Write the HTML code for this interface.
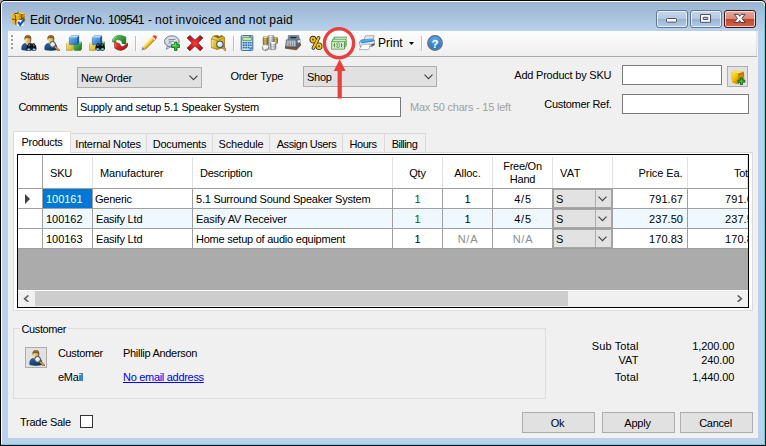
<!DOCTYPE html>
<html lang="en"><head><meta charset="utf-8"><title>Edit Order</title>
<style>
html,body{margin:0;padding:0}
body{width:766px;height:446px;position:relative;overflow:hidden;background:#a9a9a9;font-family:"Liberation Sans",sans-serif;font-size:11px;color:#000;line-height:13px;letter-spacing:-0.25px}
.a{position:absolute;white-space:nowrap}
#frame{left:0;top:0;width:766px;height:446px;background:#000;border-radius:5px 5px 0 0}
#frame2{left:1px;top:1px;width:764px;height:444px;border-radius:4px 4px 0 0;background:#fff}
#frame3{left:2px;top:2px;width:762px;height:442px;border-radius:3px 3px 0 0;background:linear-gradient(#99b4d1 0,#b9d1ea 29px,#b9d1ea 100%)}
#edgeR{left:764px;top:6px;width:1px;height:439px;background:#5ad3f2}
#edgeB{left:1px;top:444px;width:764px;height:1px;background:#5ad3f2}
#client{left:8px;top:31px;width:750px;height:407px;background:#f0f0f0}
#title{left:30px;top:12px;font-size:12px;line-height:16px;color:#000;letter-spacing:-0.02px}
.cb{top:10px;height:16px;border:1px solid #62789a;border-radius:3px;box-shadow:inset 0 0 0 1px rgba(255,255,255,.65);background:linear-gradient(#c5d6ea 0,#b3c9e3 48%,#97b4d6 52%,#b4cbe5 100%)}
#cbx{border-color:#431422;background:linear-gradient(#e3aa9c 0,#d68a78 48%,#c1452b 52%,#d0684e 100%)}
#tool{left:8px;top:31px;width:749px;height:25px;background:linear-gradient(#fdfdfd,#f5f5f5 60%,#eeeeee);border-bottom:1px solid #a9a9a9;box-shadow:inset -1px 0 0 rgba(0,0,0,.08)}
.sep{top:36px;width:1px;height:15px;background:#bdbdbd;box-shadow:1px 0 0 #fff}
.ic{top:35px;width:16px;height:16px}
.combo{height:19px;border:1px solid #adadad;background:#e1e1e1}
.combo span{position:absolute;left:3px;top:4px}
.combo svg{position:absolute;right:3.5px;top:7.4px}
.tb{height:18px;border:1px solid #7a7a7a;background:#fff}
.tab{top:133px;height:19px;border:1px solid #d9d9d9;border-bottom:none;background:#f0f0f0;box-sizing:border-box;text-align:center;line-height:20px}
.btn{height:19px;border:1px solid #adadad;background:#e1e1e1;text-align:center;line-height:21px;text-indent:-2px}
.hc{top:155px;height:33px;border-right:1px solid transparent;box-sizing:border-box;background:linear-gradient(#e2e2e2,#e2e2e2) right 2px/1px 100% no-repeat border-box,#fff}
.row{left:18px;width:730px;height:19px;border-bottom:1px solid #a0a0a0}
.c{top:0;height:19px;border-right:1px solid #a0a0a0;box-sizing:border-box;line-height:20px;padding:0 2px;overflow:hidden}
.r{text-align:right}.m{text-align:center}
.vat{top:0;left:535px;width:59px;height:19px;box-sizing:border-box;border:1px solid #a6a6a6;background:#e2e2e2}
</style></head><body>
<div class="a" id="frame"></div><div class="a" id="frame2"></div><div class="a" id="frame3"></div>
<div class="a" id="edgeR"></div><div class="a" id="edgeB"></div>
<div class="a" id="client"></div>
<!--TITLE-->
<svg class="a" style="left:11px;top:11px" width="16" height="16" viewBox="0 0 16 16">
<path d="M0.6 3.4 L5.6 0.8 L13.6 2.2 L13.8 10.4 L8 14.8 L1.6 12.6Z" fill="#e8b41a"/>
<path d="M0.6 3.4 L5.6 0.8 L13.6 2.2 L8 4.4Z" fill="#f9dc5a"/>
<path d="M8 4.4 L13.6 2.2 L13.8 10.4 L8 14.8Z" fill="#c98e0c"/>
<path d="M3.2 2.2 L10.6 3.4 M8 0.9 L2.6 3.7 M4.4 4 L4.6 13.6 M0.8 8 L8 9.6 L13.6 6.2 M10.8 3.2 L10.8 12.4" stroke="#5a3c08" stroke-width=".8" fill="none"/>
<path d="M6.2 9 H12.4 V15 H6.2Z" fill="#f4f6fa"/>
<path d="M7.2 10.8 L9.2 13.8 L13.4 8" fill="none" stroke="#1450c8" stroke-width="2.1"/>
</svg>
<div class="a" id="title"><span id="t1">Edit Order </span><span class="a" id="t1b" style="left:56.5px;top:0">No. </span><span class="a" id="t2" style="left:78px;top:0;letter-spacing:-0.7px">109541 </span><span class="a" id="t2b" style="left:118px;top:0">-</span><span class="a" id="t3" style="left:125px;top:0;letter-spacing:0.28px;word-spacing:-0.6px">not invoiced and not paid</span></div>
<div class="a cb" style="left:656px;width:30px"></div>
<div class="a cb" style="left:690px;width:30px"></div>
<div class="a cb" id="cbx" style="left:724px;width:30px"></div>
<svg class="a" style="left:656px;top:10px" width="100" height="18" viewBox="656 10 100 18">
<rect x="666.5" y="18.5" width="10" height="3.6" rx=".8" fill="#fdfdfd" stroke="#4c5564" stroke-width="1"/>
<path d="M700.5 14.5 H710.5 V22.3 H700.5Z M703.3 17.3 V19.5 H707.7 V17.3Z" fill="#fdfdfd" fill-rule="evenodd" stroke="#4c5564" stroke-width="1"/>
<path d="M734.3 14.4 L738.3 14.4 L739.7 16.3 L741.1 14.4 L745.1 14.4 L741.9 18.4 L745.3 22.5 L741.1 22.5 L739.7 20.5 L738.3 22.5 L734.1 22.5 L737.5 18.4Z" fill="#fdfdfd" stroke="#4a4450" stroke-width="1" stroke-linejoin="round"/>
</svg>
<!--TOOLBAR-->
<div class="a" id="tool"></div>
<!--TBSTART-->
<svg width="0" height="0" style="position:absolute"><defs>
<linearGradient id="gFace" x1="0" y1="0" x2="1" y2="0"><stop offset="0" stop-color="#f6e3a8"/><stop offset="1" stop-color="#c99a3e"/></linearGradient>
<linearGradient id="gBody" x1="0" y1="0" x2="1" y2="1"><stop offset="0" stop-color="#2f6cb4"/><stop offset="1" stop-color="#08244a"/></linearGradient>
<linearGradient id="gBlue" x1="0" y1="0" x2="1" y2="1"><stop offset="0" stop-color="#7fc0f5"/><stop offset="1" stop-color="#1f63b0"/></linearGradient>
<linearGradient id="gYel" x1="0" y1="0" x2="1" y2="1"><stop offset="0" stop-color="#fdf08a"/><stop offset="1" stop-color="#c9a21e"/></linearGradient>
<linearGradient id="gGrn" x1="0" y1="0" x2="1" y2="1"><stop offset="0" stop-color="#5fc85a"/><stop offset="1" stop-color="#15701a"/></linearGradient>
<linearGradient id="gRed" x1="0" y1="0" x2="1" y2="1"><stop offset="0" stop-color="#f0403a"/><stop offset="1" stop-color="#9c0a10"/></linearGradient>
<radialGradient id="gLens" cx=".4" cy=".4" r=".7"><stop offset="0" stop-color="#ffffff"/><stop offset="1" stop-color="#a9cdee"/></radialGradient>
<linearGradient id="gBox" x1="0" y1="0" x2="1" y2="1"><stop offset="0" stop-color="#f7e680"/><stop offset=".5" stop-color="#e0bd2e"/><stop offset="1" stop-color="#b8900f"/></linearGradient>
<linearGradient id="gSil" x1="0" y1="0" x2="1" y2="0"><stop offset="0" stop-color="#9aa0a6"/><stop offset=".4" stop-color="#ffffff"/><stop offset="1" stop-color="#8c9298"/></linearGradient>
<linearGradient id="gGold" x1="0" y1="0" x2="1" y2="0"><stop offset="0" stop-color="#8f7420"/><stop offset=".4" stop-color="#f3e08a"/><stop offset="1" stop-color="#8a6d18"/></linearGradient>
<radialGradient id="gHelp" cx=".5" cy=".3" r=".8"><stop offset="0" stop-color="#5fb0f5"/><stop offset="1" stop-color="#1458a8"/></radialGradient>
</defs></svg>
<svg class="a" style="left:10px;top:34px" width="4" height="18" viewBox="0 0 4 18"><g fill="#a0a0a0"><rect x="1" y="1" width="2" height="2"/><rect x="1" y="5" width="2" height="2"/><rect x="1" y="9" width="2" height="2"/><rect x="1" y="13" width="2" height="2"/></g></svg>
<svg class="a" style="left:21px;top:35px" width="16" height="16" viewBox="0 0 16 16"><path d="M0.8 14.8 Q0.2 9.6 3.6 8.6 L5.2 7.6 L9.2 7.6 L10.4 8.6 Q13.4 9.6 12.8 14.8 Q7 16.2 0.8 14.8Z" fill="url(#gBody)" stroke="#0c2a52" stroke-width=".5"/>
<path d="M5 8 L6.6 11.2 L8.2 9 L8.8 8Z" fill="#dfe6ee"/>
<rect x="3.6" y="0.8" width="6.2" height="8" rx="2.2" fill="url(#gFace)"/>
<path d="M3.4 4.6 Q3 0.1 6.8 0.1 Q10.6 0.1 10.3 4 L10.1 7 L9.2 6.4 L9.1 3.4 Q6.7 2.5 4.5 3.2 L4.1 4.8Z" fill="#7d5a2a"/>
<path d="M4.6 1.4 Q6.8 0.4 9 1.2" stroke="#b4905a" stroke-width=".7" fill="none"/><g transform="translate(5.2 8.2) scale(1.05)"><path d="M2.2 0 L3.9 0 L4.6 1.5 L5.4 1.5 L6.1 0 L7.8 0 Q9.9 2.6 9.9 5.2 Q9.7 7.5 7.4 7.5 Q5.6 7.5 5.2 5.7 L4.8 5.7 Q4.4 7.5 2.6 7.5 Q0.1 7.5 0.1 5.2 Q0.1 2.6 2.2 0Z" fill="#131318"/>
<path d="M2.5 0.7 L3.5 0.7 L3.3 2.6 L2 2.8Z M6.5 0.7 L7.5 0.7 L8 2.8 L6.7 2.6Z" fill="#7d7d88"/>
<ellipse cx="2.5" cy="5.9" rx="1.6" ry="1" fill="#5fa8e6"/><ellipse cx="7.5" cy="5.9" rx="1.6" ry="1" fill="#5fa8e6"/>
<ellipse cx="2.5" cy="6.2" rx="1" ry=".5" fill="#cfe6fa"/><ellipse cx="7.5" cy="6.2" rx="1" ry=".5" fill="#cfe6fa"/></g></svg>
<svg class="a" style="left:44px;top:35px" width="16" height="16" viewBox="0 0 16 16"><path d="M0.8 14.8 Q0.2 9.6 3.6 8.6 L5.2 7.6 L9.2 7.6 L10.4 8.6 Q13.4 9.6 12.8 14.8 Q7 16.2 0.8 14.8Z" fill="url(#gBody)" stroke="#0c2a52" stroke-width=".5"/>
<path d="M5 8 L6.6 11.2 L8.2 9 L8.8 8Z" fill="#dfe6ee"/>
<rect x="3.6" y="0.8" width="6.2" height="8" rx="2.2" fill="url(#gFace)"/>
<path d="M3.4 4.6 Q3 0.1 6.8 0.1 Q10.6 0.1 10.3 4 L10.1 7 L9.2 6.4 L9.1 3.4 Q6.7 2.5 4.5 3.2 L4.1 4.8Z" fill="#7d5a2a"/>
<path d="M4.6 1.4 Q6.8 0.4 9 1.2" stroke="#b4905a" stroke-width=".7" fill="none"/><path d="M10.629999999999999 11.43 L14.8 15.4" stroke="#6b4a16" stroke-width="2.2" stroke-linecap="round"/><path d="M11.229999999999999 12.03 L14.8 15.4" stroke="#d9a646" stroke-width="1.3" stroke-linecap="round"/>
<circle cx="8.6" cy="9.4" r="2.9" fill="url(#gLens)" stroke="#3c4654" stroke-width="1"/></svg>
<svg class="a" style="left:66px;top:35px" width="16" height="16" viewBox="0 0 16 16"><path d="M0.4 8.6 L2 7 L8 7 L8 14 L6.6 15.4 L0.4 15.4Z" fill="url(#gYel)" stroke="#a08616" stroke-width=".5"/>
<path d="M0.4 8.6 L2 7 L8 7 L6.6 8.6Z" fill="#fdf6b0"/>
<path d="M8.4 8.6 L10 7 L15.8 7 L15.8 14 L14.4 15.4 L8.4 15.4Z" fill="url(#gGrn)" stroke="#1b6a1e" stroke-width=".5"/>
<path d="M8.4 8.6 L10 7 L15.8 7 L14.4 8.6Z" fill="#8fe08a"/>
<path d="M3.4 2.6 L5 0.8 L12.8 0.8 L12.8 8 L11.2 9.6 L3.4 9.6Z" fill="url(#gBlue)" stroke="#1d5aa0" stroke-width=".5"/>
<path d="M3.4 2.6 L5 0.8 L12.8 0.8 L11.2 2.6Z" fill="#b4dcfb"/>
<path d="M11.2 2.6 L12.8 0.8 L12.8 8 L11.2 9.6Z" fill="#1a559c"/></svg>
<svg class="a" style="left:89px;top:35px" width="16" height="16" viewBox="0 0 16 16"><path d="M0.4 8.6 L2 7 L8 7 L8 14 L6.6 15.4 L0.4 15.4Z" fill="url(#gYel)" stroke="#a08616" stroke-width=".5"/>
<path d="M0.4 8.6 L2 7 L8 7 L6.6 8.6Z" fill="#fdf6b0"/>
<path d="M8.4 8.6 L10 7 L15.8 7 L15.8 14 L14.4 15.4 L8.4 15.4Z" fill="url(#gGrn)" stroke="#1b6a1e" stroke-width=".5"/>
<path d="M8.4 8.6 L10 7 L15.8 7 L14.4 8.6Z" fill="#8fe08a"/>
<path d="M3.4 2.6 L5 0.8 L12.8 0.8 L12.8 8 L11.2 9.6 L3.4 9.6Z" fill="url(#gBlue)" stroke="#1d5aa0" stroke-width=".5"/>
<path d="M3.4 2.6 L5 0.8 L12.8 0.8 L11.2 2.6Z" fill="#b4dcfb"/>
<path d="M11.2 2.6 L12.8 0.8 L12.8 8 L11.2 9.6Z" fill="#1a559c"/><g transform="translate(6.2 8.2) scale(0.98)"><path d="M2.2 0 L3.9 0 L4.6 1.5 L5.4 1.5 L6.1 0 L7.8 0 Q9.9 2.6 9.9 5.2 Q9.7 7.5 7.4 7.5 Q5.6 7.5 5.2 5.7 L4.8 5.7 Q4.4 7.5 2.6 7.5 Q0.1 7.5 0.1 5.2 Q0.1 2.6 2.2 0Z" fill="#131318"/>
<path d="M2.5 0.7 L3.5 0.7 L3.3 2.6 L2 2.8Z M6.5 0.7 L7.5 0.7 L8 2.8 L6.7 2.6Z" fill="#7d7d88"/>
<ellipse cx="2.5" cy="5.9" rx="1.6" ry="1" fill="#5fa8e6"/><ellipse cx="7.5" cy="5.9" rx="1.6" ry="1" fill="#5fa8e6"/>
<ellipse cx="2.5" cy="6.2" rx="1" ry=".5" fill="#cfe6fa"/><ellipse cx="7.5" cy="6.2" rx="1" ry=".5" fill="#cfe6fa"/></g></svg>
<svg class="a" style="left:112px;top:35px" width="16" height="16" viewBox="0 0 16 16"><path d="M2.2 7 L7.4 8.6 L9 11 Q11 11.6 12.6 10.4 L15.4 8 Q16.4 9.4 15.6 11 Q13.6 14.6 8.6 15.6 Q5.4 15.2 2.8 13.2Z" fill="url(#gRed)" stroke="#8a0a10" stroke-width=".5"/>
<path d="M3.2 8 L4 12.6" stroke="#f08080" stroke-width=".7"/>
<circle cx="10.6" cy="9.9" r="1.3" fill="#fff"/>
<path d="M0.3 6.8 Q0 3.2 3.4 1.4 Q6.4 -0.2 9.6 0.6 L11 2.2 L10.2 0.8 L13.9 2 L13.9 8.8 Q12.2 9.6 10 8.4 L9.8 6.6 Q8 4.2 5.4 5 Q4.2 5.6 3.6 7.2Z" fill="url(#gGrn)" stroke="#1a7a20" stroke-width=".5"/>
<path d="M1.2 5.6 Q1.6 2.8 4.6 1.8" stroke="#a8f0a0" stroke-width=".8" fill="none"/>
<circle cx="5.2" cy="5.6" r=".8" fill="#fff"/></svg>
<div class="a sep" style="left:135px"></div>
<svg class="a" style="left:141px;top:35px" width="16" height="16" viewBox="0 0 16 16"><path d="M0.4 15.6 L1.6 11.4 L4.6 14.4Z" fill="#8a8f98"/>
<path d="M1.6 11.4 L11.6 1.4 L14.6 4.4 L4.6 14.4Z" fill="#f2c832"/>
<path d="M1.6 11.4 L11.6 1.4 L12.6 2.4 L2.6 12.4Z" fill="#fbe88a"/>
<path d="M3.6 13.4 L13.6 3.4 L14.6 4.4 L4.6 14.4Z" fill="#c8951a"/>
<path d="M11.6 1.4 L12.4 0.6 Q14 -0.4 15.2 0.8 Q16.4 2 15.4 3.6 L14.6 4.4Z" fill="#e0453a"/>
<path d="M10.8 2.2 L11.6 1.4 L14.6 4.4 L13.8 5.2Z" fill="#d9dde2"/></svg>
<svg class="a" style="left:164px;top:35px" width="16" height="16" viewBox="0 0 16 16"><defs><radialGradient id="gBub" cx=".5" cy=".4" r=".7"><stop offset="0" stop-color="#f4f7fa"/><stop offset="1" stop-color="#b4c2d0"/></radialGradient></defs>
<path d="M3.4 10.8 L2.2 14.4 L6.6 11.8Z" fill="#d4dde6" stroke="#6f8296" stroke-width=".8"/>
<ellipse cx="7.8" cy="6.4" rx="7.4" ry="5.6" fill="url(#gBub)" stroke="#6f8296" stroke-width="1"/>
<path d="M4.6 4.4 H11.4 M4.6 6.2 H10 M4.6 8 H7.4" stroke="#5c6a7a" stroke-width=".8"/>
<path d="M10.6 7.2 H13 V9.8 H15.8 V12.4 H13 V15.4 H10.6 V12.4 H7.6 V9.8 H10.6Z" fill="#3fc43a" stroke="#0f6a14" stroke-width=".9"/>
<path d="M11.2 8 V10.4 H8.4" stroke="#a8f0a0" stroke-width=".7" fill="none"/></svg>
<svg class="a" style="left:187px;top:35px" width="16" height="16" viewBox="0 0 16 16"><defs><radialGradient id="gRx" cx=".5" cy=".5" r=".6"><stop offset="0" stop-color="#ff3a38"/><stop offset="1" stop-color="#a40c12"/></radialGradient></defs><path d="M2.8 0.4 L8 5.2 L13.2 0.4 L15.8 3 L10.8 8 L15.8 13 L13.2 15.8 L8 10.8 L2.8 15.8 L0.2 13 L5.2 8 L0.2 3Z" fill="url(#gRx)" stroke="#7c060c" stroke-width=".7"/></svg>
<svg class="a" style="left:210px;top:35px" width="16" height="16" viewBox="0 0 16 16"><path d="M1.4 4 L3.4 1 L7.4 0.4 L9.4 1.6 L11.6 0.4 L14.6 2.4 L14.6 12.4 L7 14.4 L1.4 12.6Z" fill="url(#gBox)" stroke="#8a6a10" stroke-width=".7"/>
<path d="M1.4 4 L7 5.4 L14.6 3 M7 5.4 L7 14.4" stroke="#9a7a12" stroke-width=".6" fill="none"/>
<path d="M3.4 1 L7.4 0.4 L9.4 1.6 L11.6 0.4 L13 1.4 L8 3.4Z" fill="#8a6a14"/>
<path d="M2 5 L2 12" stroke="#fbf0a0" stroke-width=".8"/><path d="M12.21 11.61 L15.4 14.8" stroke="#6b4a16" stroke-width="2.2" stroke-linecap="round"/><path d="M12.81 12.209999999999999 L15.4 14.8" stroke="#d9a646" stroke-width="1.3" stroke-linecap="round"/>
<circle cx="9.9" cy="9.3" r="3.3" fill="url(#gLens)" stroke="#3c4654" stroke-width="1"/></svg>
<div class="a sep" style="left:233px"></div>
<svg class="a" style="left:239px;top:35px" width="16" height="16" viewBox="0 0 16 16"><rect x="2.2" y="0.4" width="11.6" height="15.2" rx="1.2" fill="#c4d9ec" stroke="#2f68a6" stroke-width="1"/>
<rect x="3.8" y="2.2" width="8.4" height="3.2" fill="#b8eea0" stroke="#3a7a4a" stroke-width=".6"/>
<rect x="10.2" y="1.2" width="2" height=".9" fill="#d03a30"/>
<g fill="#2f68a6"><rect x="3.8" y="7" width="1.8" height="1.5"/><rect x="6.3" y="7" width="1.8" height="1.5"/><rect x="8.8" y="7" width="1.8" height="1.5"/><rect x="11.2" y="7" width="1.4" height="1.5"/>
<rect x="3.8" y="9.4" width="1.8" height="1.5"/><rect x="6.3" y="9.4" width="1.8" height="1.5"/><rect x="8.8" y="9.4" width="1.8" height="1.5"/><rect x="11.2" y="9.4" width="1.4" height="1.5"/>
<rect x="3.8" y="11.8" width="1.8" height="1.5"/><rect x="6.3" y="11.8" width="1.8" height="1.5"/><rect x="8.8" y="11.8" width="1.8" height="1.5"/></g>
<path d="M12.8 11.4 L12.8 14.6 L9.6 14.6Z" fill="#2f7fd0"/></svg>
<svg class="a" style="left:262px;top:35px" width="16" height="16" viewBox="0 0 16 16"><rect x="1.1" y="1.5" width="4.9" height="8.6" rx="1.4" fill="url(#gGold)" stroke="#6a5412" stroke-width=".5"/>
<path d="M1.3 3.6 H5.8 M1.3 5.2 H5.8 M1.3 6.8 H5.8 M1.3 8.4 H5.8" stroke="#6a5412" stroke-width=".45"/>
<ellipse cx="3.55" cy="2.2" rx="2.2" ry=".8" fill="#f8ea9c"/>
<rect x="11.6" y="2.4" width="4.2" height="6.2" rx="1.4" fill="url(#gGold)" stroke="#6a5412" stroke-width=".5"/>
<path d="M11.8 4.4 H15.6 M11.8 6 H15.6" stroke="#6a5412" stroke-width=".45"/>
<rect x="6.2" y="0.2" width="5.7" height="14.2" rx="1.6" fill="url(#gSil)" stroke="#5c6268" stroke-width=".5"/>
<path d="M6.4 2.6 H11.7 M6.4 4.2 H11.7 M6.4 5.8 H11.7 M6.4 7.4 H11.7 M6.4 9 H11.7" stroke="#70767c" stroke-width=".4"/>
<rect x="8.4" y="6.9" width="5.6" height="7.8" rx="1.6" fill="url(#gSil)" stroke="#5c6268" stroke-width=".5"/>
<ellipse cx="11.2" cy="7.7" rx="2.5" ry=".8" fill="#ffffff"/>
<path d="M8.6 9.8 H13.8 M8.6 11.4 H13.8 M8.6 13 H13.8" stroke="#70767c" stroke-width=".4"/>
<ellipse cx="3.5" cy="12.8" rx="3.5" ry="2.7" fill="url(#gSil)" stroke="#5c6268" stroke-width=".5"/>
<ellipse cx="3.5" cy="11.6" rx="3" ry="1.3" fill="#fafbfc"/>
<rect x="2.8" y="14.5" width="1.6" height="1" fill="#c0302a"/></svg>
<svg class="a" style="left:285px;top:35px" width="16" height="16" viewBox="0 0 16 16"><path d="M0 11.4 L11.4 12 L16.2 8.7 L16.2 9.9 L11.4 15 L0 13.2Z" fill="#7a5a34" stroke="#4a3418" stroke-width=".5"/>
<path d="M0 11.4 L11.4 12 L16.2 8.7 L5.4 8.4Z" fill="#8f6c40"/>
<path d="M11.4 4.8 L15 4.2 L15 9.4 L11.4 12Z" fill="#56687c" stroke="#3a4656" stroke-width=".4"/>
<path d="M1.4 4.8 L11.4 4.8 L11.4 12 L0.4 11.6Z" fill="#8c9eb2" stroke="#3e4c5c" stroke-width=".5"/>
<path d="M3 4.8 L3.4 0.4 L13.6 0.4 L14.4 4.2 L11.4 4.8Z" fill="#7e90a4" stroke="#3e4c5c" stroke-width=".5"/>
<rect x="5.2" y="1.8" width="6.4" height="1.5" fill="#1e2630"/>
<path d="M3 5.6 V10.6 M5.4 5.6 V10.6 M7.6 5.6 V10.6 M9.6 5.6 V10.6" stroke="#c4d0dc" stroke-width=".9"/>
<rect x="3.4" y="8.6" width="1.1" height="1.5" fill="#f05a40"/><rect x="5.8" y="8.6" width="1.1" height="1.5" fill="#f05a40"/><rect x="7.9" y="8.6" width="1.1" height="1.5" fill="#f05a40"/>
<path d="M12.4 5.4 L15.6 4.6 L15.8 6.6 L13.6 7.8 L12.6 7.4Z" fill="#eef2f6" stroke="#6c7a8a" stroke-width=".4"/></svg>
<svg class="a" style="left:308px;top:35px" width="16" height="16" viewBox="0 0 16 16"><title>%</title><g fill="none" stroke-linecap="round"><g stroke="#2a2a42" stroke-width="3.6"><line x1="10.6" y1="2.8" x2="5.4" y2="13"/><ellipse cx="5" cy="4.6" rx="1.7" ry="2"/><ellipse cx="11" cy="11.2" rx="1.7" ry="2"/></g>
<g stroke="#fac400" stroke-width="1.9"><line x1="10.6" y1="2.8" x2="5.4" y2="13"/><ellipse cx="5" cy="4.6" rx="1.7" ry="2"/><ellipse cx="11" cy="11.2" rx="1.7" ry="2"/></g></g></svg>
<svg class="a" style="left:331px;top:35px" width="16" height="16" viewBox="0 0 16 16"><g stroke="#3f8f2f" stroke-width=".85" fill="#f4faf1"><path d="M3 2.2 L16 2.2 L16 9.6 L3 9.6Z"/><path d="M1.6 4.2 L14.8 4.2 L14.8 11.8 L1.6 11.8Z"/><path d="M0.3 6.3 L13.5 6.3 L13.5 14.1 L0.3 14.1Z" fill="#ffffff"/></g>
<path d="M1.6 7.6 H12.2 V12.8 H1.6Z" fill="none" stroke="#8fca80" stroke-width=".6"/>
<path d="M3.6 8.4 Q2.4 10.2 3.6 12 M10.2 8.4 Q11.4 10.2 10.2 12" fill="none" stroke="#3f8f2f" stroke-width="1.3"/>
<ellipse cx="6.9" cy="10.2" rx="2" ry="2.4" fill="#eaf6e6" stroke="#4a9a3a" stroke-width=".7"/><path d="M6.9 8.8 V11.6" stroke="#3a8a2a" stroke-width=".9"/></svg>
<svg class="a" style="left:359px;top:35px" width="16" height="16" viewBox="0 0 16 16"><path d="M6.6 0.8 L15.2 0.8 L13.4 5.4 L4.6 5.4Z" fill="#e8ecf0" stroke="#6c7888" stroke-width=".6"/>
<path d="M2.6 4.8 L13.8 3.8 L15.8 5.4 L15.6 9.8 L12.8 11.6 L1.2 11.6 L0.4 7Z" fill="#e4e9ee" stroke="#5c6a7a" stroke-width=".6"/>
<path d="M1 6.8 Q1.6 5 3.4 4.8 L13.6 3.9 L15.4 5.4 L14.6 6.6 L3 8.2Z" fill="#2f8fe0"/>
<path d="M1.6 6.6 L13.6 4.6" stroke="#8fd0ff" stroke-width=".6"/>
<path d="M3.6 9.2 L11.8 9.2 L9.6 14.6 L0.2 14.6Z" fill="#ffffff" stroke="#7a8694" stroke-width=".6"/>
<path d="M12 9.4 L15.4 8 L15.4 9.8 L12.6 11.6Z" fill="#4a5868"/></svg>
<div class="a" style="left:378px;top:35px;font-size:12px;line-height:16px;letter-spacing:0px">Print</div>
<svg class="a" style="left:409px;top:42px" width="5" height="3" viewBox="0 0 5 3"><path d="M0 0 H5 L2.5 3Z" fill="#000"/></svg>
<div class="a sep" style="left:421px"></div>
<svg class="a" style="left:427px;top:35px" width="16" height="16" viewBox="0 0 16 16"><circle cx="8" cy="8" r="7.2" fill="url(#gHelp)" stroke="#5f6978" stroke-width="1.4"/>
<circle cx="8" cy="8" r="6.3" fill="none" stroke="#8fc4f5" stroke-width=".5" opacity=".7"/>
<text x="8" y="12.6" text-anchor="middle" font-family="Liberation Sans, sans-serif" font-weight="bold" font-size="11.5" fill="#fff" letter-spacing="0">?</text></svg>
<!--TBEND-->
<div class="a" style="left:20px;top:70px;letter-spacing:-0.38px">Status</div>
<div class="a combo" style="left:77px;top:67px;width:123px"><span>New Order</span><svg width="9" height="6" viewBox="0 0 9 6"><path d="M0.5 0.7 L4.5 4.7 L8.5 0.7" fill="none" stroke="#404040" stroke-width="1.1"/></svg></div>
<div class="a" style="left:230.4px;top:70px;letter-spacing:-0.2px">Order Type</div>
<div class="a combo" style="left:303px;top:66px;width:132px"><span>Shop</span><svg width="9" height="6" viewBox="0 0 9 6"><path d="M0.5 0.7 L4.5 4.7 L8.5 0.7" fill="none" stroke="#404040" stroke-width="1.1"/></svg></div>
<div class="a" style="left:514.3px;top:69px;letter-spacing:-0.22px">Add Product by SKU</div>
<div class="a tb" style="left:622px;top:65px;width:98px"></div>
<div class="a btn" style="left:727px;top:66px;width:19px;height:19px"></div>
<div class="a" style="left:18.4px;top:101px;letter-spacing:-0.55px">Comments</div>
<div class="a tb" style="left:77px;top:97px;width:322px"><span class="a" style="left:2px;top:3px;letter-spacing:-0.235px">Supply and setup 5.1 Speaker System</span></div>
<div class="a" style="left:410px;top:101px;color:#a0a0a0;letter-spacing:-0.23px">Max 50 chars - 15 left</div>
<div class="a" style="left:544.3px;top:98px;letter-spacing:-0.29px">Customer Ref.</div>
<div class="a tb" style="left:622px;top:94px;width:125px"></div>
<div class="a" style="left:13px;top:152px;width:738px;height:157px;border:1px solid #dcdcdc;background:#fff;box-sizing:content-box"></div>
<div class="a tab" style="left:70px;width:77px;text-indent:-1px;letter-spacing:-0.22px">Internal Notes</div>
<div class="a tab" style="left:146px;width:67px">Documents</div>
<div class="a tab" style="left:212px;width:58px;letter-spacing:-0.08px">Schedule</div>
<div class="a tab" style="left:269px;width:74px;text-indent:1px;letter-spacing:-0.43px">Assign Users</div>
<div class="a tab" style="left:342px;width:43px;text-indent:-1px;letter-spacing:-0.5px">Hours</div>
<div class="a tab" style="left:384px;width:42px;text-indent:-1px;letter-spacing:-0.55px">Billing</div>
<div class="a tab" style="left:13px;top:131px;width:58px;height:22px;background:#fff;border-color:#dcdcdc;line-height:21px;letter-spacing:-0.3px">Products</div>
<div class="a" style="left:17px;top:154px;width:730px;height:152px;border:1px solid #000;background:#ababab"></div>
<div class="a" style="left:0;top:0;width:748px;height:446px;overflow:hidden">
<div class="a hc" style="left:18px;width:25px;border-right-color:#a0a0a0"></div>
<div class="a hc" style="left:43px;width:50px"><span class="a" style="left:7px;top:12px;letter-spacing:-0.2px">SKU</span></div>
<div class="a hc" style="left:93px;width:100px"><span class="a" style="left:7px;top:12px;letter-spacing:-0.12px">Manufacturer</span></div>
<div class="a hc" style="left:193px;width:200px"><span class="a" style="left:7px;top:12px">Description</span></div>
<div class="a hc" style="left:393px;width:50px"><span class="a" style="left:0;width:49px;text-align:center;top:12px">Qty</span></div>
<div class="a hc" style="left:443px;width:50px"><span class="a" style="left:0;width:49px;text-align:center;top:12px;letter-spacing:-0.1px">Alloc.</span></div>
<div class="a hc" style="left:493px;width:60px"><span class="a" style="left:0;width:59px;text-align:center;top:5px;line-height:13px">Free/On<br>Hand</span></div>
<div class="a hc" style="left:553px;width:60px"><span class="a" style="left:7px;top:12px;letter-spacing:0.3px">VAT</span></div>
<div class="a hc" style="left:613px;width:75px"><span class="a" style="right:4.5px;top:12px;letter-spacing:-0.08px">Price Ea.</span></div>
<div class="a hc" style="left:688px;width:60px"><span class="a" style="left:46px;top:12px">Total</span></div>
<div class="a" style="left:18px;top:188px;width:730px;height:1px;background:#a0a0a0"></div>
<div class="a row" style="top:189px;background:#fff">
<div class="a c" style="left:0;width:25px;background:#fff"><svg class="a" style="left:7px;top:5px" width="6" height="10" viewBox="0 0 6 10"><path d="M0 0 L5 5 L0 10 Z" fill="#404040"/></svg></div>
<div class="a c" style="left:25px;width:50px; background:#0078d7;color:#fff;;letter-spacing:-0.03px;padding-left:3px">100161</div>
<div class="a c" style="left:75px;width:100px">Generic</div>
<div class="a c" style="left:175px;width:200px;padding-left:3px;letter-spacing:-0.24px">5.1 Surround Sound Speaker System</div>
<div class="a c m" style="left:375px;width:50px;color:#006400">1</div>
<div class="a c m" style="left:425px;width:50px;color:#000">1</div>
<div class="a c m" style="left:475px;width:60px;color:#000;letter-spacing:0.8px;text-indent:1px">4/5</div>
<div class="a c" style="left:535px;width:60px"></div>
<div class="a vat"></div><span class="a" style="left:538px;top:0;line-height:20px">S</span><div class="a" style="left:577px;top:1px;width:1px;height:17px;background:#adadad"></div><svg class="a" style="left:580px;top:7px" width="9" height="6" viewBox="0 0 9 6"><path d="M0.5 0.7 L4.5 4.7 L8.5 0.7" fill="none" stroke="#404040" stroke-width="1.15"/></svg>
<div class="a c r" style="left:595px;width:75px;padding-right:4px;letter-spacing:0.05px">791.67</div>
<div class="a c r" style="left:670px;width:75px;padding-right:4px;border-right:none;letter-spacing:0.05px">791.67</div>
</div>
<div class="a row" style="top:209px;background:#f0f8ff">
<div class="a c" style="left:0;width:25px;background:#fff"></div>
<div class="a c" style="left:25px;width:50px;;letter-spacing:-0.03px;padding-left:3px">100162</div>
<div class="a c" style="left:75px;width:100px;letter-spacing:-0.2px;padding-left:3px">Easify Ltd</div>
<div class="a c" style="left:175px;width:200px;padding-left:3px;letter-spacing:-0.1px">Easify AV Receiver</div>
<div class="a c m" style="left:375px;width:50px;color:#006400">1</div>
<div class="a c m" style="left:425px;width:50px;color:#000">1</div>
<div class="a c m" style="left:475px;width:60px;color:#000;letter-spacing:0.8px;text-indent:1px">4/5</div>
<div class="a c" style="left:535px;width:60px"></div>
<div class="a vat"></div><span class="a" style="left:538px;top:0;line-height:20px">S</span><div class="a" style="left:577px;top:1px;width:1px;height:17px;background:#adadad"></div><svg class="a" style="left:580px;top:7px" width="9" height="6" viewBox="0 0 9 6"><path d="M0.5 0.7 L4.5 4.7 L8.5 0.7" fill="none" stroke="#404040" stroke-width="1.15"/></svg>
<div class="a c r" style="left:595px;width:75px;padding-right:4px;letter-spacing:0.05px">237.50</div>
<div class="a c r" style="left:670px;width:75px;padding-right:4px;border-right:none;letter-spacing:0.05px">237.50</div>
</div>
<div class="a row" style="top:229px;background:#fff">
<div class="a c" style="left:0;width:25px;background:#fff"></div>
<div class="a c" style="left:25px;width:50px;;letter-spacing:-0.03px;padding-left:3px">100163</div>
<div class="a c" style="left:75px;width:100px;letter-spacing:-0.2px;padding-left:3px">Easify Ltd</div>
<div class="a c" style="left:175px;width:200px;padding-left:3px;letter-spacing:-0.24px">Home setup of audio equipment</div>
<div class="a c m" style="left:375px;width:50px;color:#000">1</div>
<div class="a c m" style="left:425px;width:50px;color:#8e8e8e;letter-spacing:0.8px;text-indent:1px">N/A</div>
<div class="a c m" style="left:475px;width:60px;color:#8e8e8e;letter-spacing:0.8px;text-indent:1px">N/A</div>
<div class="a c" style="left:535px;width:60px"></div>
<div class="a vat"></div><span class="a" style="left:538px;top:0;line-height:20px">S</span><div class="a" style="left:577px;top:1px;width:1px;height:17px;background:#adadad"></div><svg class="a" style="left:580px;top:7px" width="9" height="6" viewBox="0 0 9 6"><path d="M0.5 0.7 L4.5 4.7 L8.5 0.7" fill="none" stroke="#404040" stroke-width="1.15"/></svg>
<div class="a c r" style="left:595px;width:75px;padding-right:4px;letter-spacing:0.05px">170.83</div>
<div class="a c r" style="left:670px;width:75px;padding-right:4px;border-right:none;letter-spacing:0.05px">170.83</div>
</div>
</div>
<div class="a" style="left:18px;top:290px;width:730px;height:17px;background:#f0f0f0;border-top:1px solid #fff;box-sizing:border-box"></div>
<div class="a" style="left:35px;top:291px;width:533px;height:15px;background:#cdcdcd"></div>
<svg class="a" style="left:23px;top:294.5px" width="7" height="7.4" viewBox="0 0 7 8"><path d="M5.5 0.5 L1.5 4 L5.5 7.5" fill="none" stroke="#606060" stroke-width="1.8"/></svg>
<svg class="a" style="left:736px;top:294.5px" width="7" height="7.4" viewBox="0 0 7 8"><path d="M1.5 0.5 L5.5 4 L1.5 7.5" fill="none" stroke="#606060" stroke-width="1.8"/></svg>
<div class="a" style="left:13px;top:328px;width:531px;height:69px;border:1px solid #dcdcdc"></div>
<div class="a" style="left:19.6px;top:323px;background:#f0f0f0;padding:0 2px;letter-spacing:-0.42px">Customer</div>
<div class="a btn" style="left:25px;top:347px;width:20px;height:19px"></div>
<div class="a" style="left:58px;top:347px;letter-spacing:-0.35px">Customer</div>
<div class="a" style="left:123px;top:347px;letter-spacing:-0.3px">Phillip Anderson</div>
<div class="a" style="left:58px;top:371px">eMail</div>
<div class="a" style="left:123px;top:371px;color:#0000ff;text-decoration:underline;letter-spacing:-0.3px">No email address</div>
<div class="a" style="left:20px;top:416px">Trade Sale</div>
<div class="a" style="left:80px;top:415px;width:11px;height:11px;border:1px solid #333;background:#fff"></div>
<div class="a r" style="left:540.6px;width:98px;top:340px;letter-spacing:0.12px">Sub Total</div>
<div class="a r" style="left:540.6px;width:98px;top:354px;letter-spacing:0.12px">VAT</div>
<div class="a r" style="left:540.6px;width:98px;top:371px;letter-spacing:0.12px">Total</div>
<div class="a r" style="left:640.4px;width:94px;top:340px;letter-spacing:-0.08px">1,200.00</div>
<div class="a r" style="left:640.4px;width:94px;top:354px;letter-spacing:-0.08px">240.00</div>
<div class="a r" style="left:640.4px;width:94px;top:371px;letter-spacing:-0.08px">1,440.00</div>
<div class="a btn" style="left:522px;top:412px;width:71px">Ok</div>
<div class="a btn" style="left:602px;top:412px;width:71px">Apply</div>
<div class="a btn" style="left:680px;top:412px;width:71px">Cancel</div>
<!--SBSTART-->
<svg class="a" style="left:730px;top:69.6px" width="16" height="16" viewBox="0 0 16 16"><defs><linearGradient id="gBp" x1="0" y1="0" x2=".6" y2="1"><stop offset="0" stop-color="#ffe94a"/><stop offset=".6" stop-color="#f2bc00"/><stop offset="1" stop-color="#c88a08"/></linearGradient></defs>
<path d="M1 2.6 L5.4 0.5 L14 1.8 L14.2 10 L7.8 14.2 L2.2 12.4Z" fill="#e0a000"/>
<path d="M1 2.6 L5.4 0.5 L14 1.8 L8.4 3.6Z" fill="#fbe45a"/>
<path d="M1 2.6 L8.4 3.6 Q7.4 9 7.8 14.2 L2.2 12.4 Q1 7 1 2.6Z" fill="url(#gBp)"/>
<path d="M8.4 3.6 L14 1.8 L14.2 10 L7.8 14.2 Q7.4 9 8.4 3.6Z" fill="#c48a0c"/>
<path d="M8.6 4.6 L13.4 3.2 L13.4 6" fill="none" stroke="#a87406" stroke-width=".8"/>
<path d="M10.4 8 H12.4 V10.2 H14.8 V12.2 H12.4 V14.6 H10.4 V12.2 H8 V10.2 H10.4Z" fill="#35d040" stroke="#0a5a12" stroke-width=".9" stroke-linejoin="round"/></svg>
<svg class="a" style="left:29px;top:350px" width="16" height="16" viewBox="0 0 16 16"><path d="M0.8 14.8 Q0.2 9.6 3.6 8.6 L5.2 7.6 L9.2 7.6 L10.4 8.6 Q13.4 9.6 12.8 14.8 Q7 16.2 0.8 14.8Z" fill="url(#gBody)" stroke="#0c2a52" stroke-width=".5"/>
<path d="M5 8 L6.6 11.2 L8.2 9 L8.8 8Z" fill="#dfe6ee"/>
<rect x="3.6" y="0.8" width="6.2" height="8" rx="2.2" fill="url(#gFace)"/>
<path d="M3.4 4.6 Q3 0.1 6.8 0.1 Q10.6 0.1 10.3 4 L10.1 7 L9.2 6.4 L9.1 3.4 Q6.7 2.5 4.5 3.2 L4.1 4.8Z" fill="#7d5a2a"/>
<path d="M4.6 1.4 Q6.8 0.4 9 1.2" stroke="#b4905a" stroke-width=".7" fill="none"/><path d="M10.629999999999999 11.43 L14.8 15.4" stroke="#6b4a16" stroke-width="2.2" stroke-linecap="round"/><path d="M11.229999999999999 12.03 L14.8 15.4" stroke="#d9a646" stroke-width="1.3" stroke-linecap="round"/>
<circle cx="8.6" cy="9.4" r="2.9" fill="url(#gLens)" stroke="#3c4654" stroke-width="1"/></svg>
<!--SBEND-->
<svg class="a" style="left:314px;top:20px" width="52" height="86" viewBox="314 20 52 86">
<defs><filter id="soft" x="-20%" y="-20%" width="140%" height="140%"><feGaussianBlur stdDeviation="0.45"/></filter></defs>
<g filter="url(#soft)"><circle cx="339" cy="43.2" r="14.6" fill="none" stroke="#e8403c" stroke-width="3.4"/>
<path d="M339.7 59.2 L345.6 70.9 L341.8 70.9 L341.8 98.4 L337.6 98.4 L337.6 70.9 L333.8 70.9 Z" fill="#e8403c"/></g>
</svg>
</body></html>
